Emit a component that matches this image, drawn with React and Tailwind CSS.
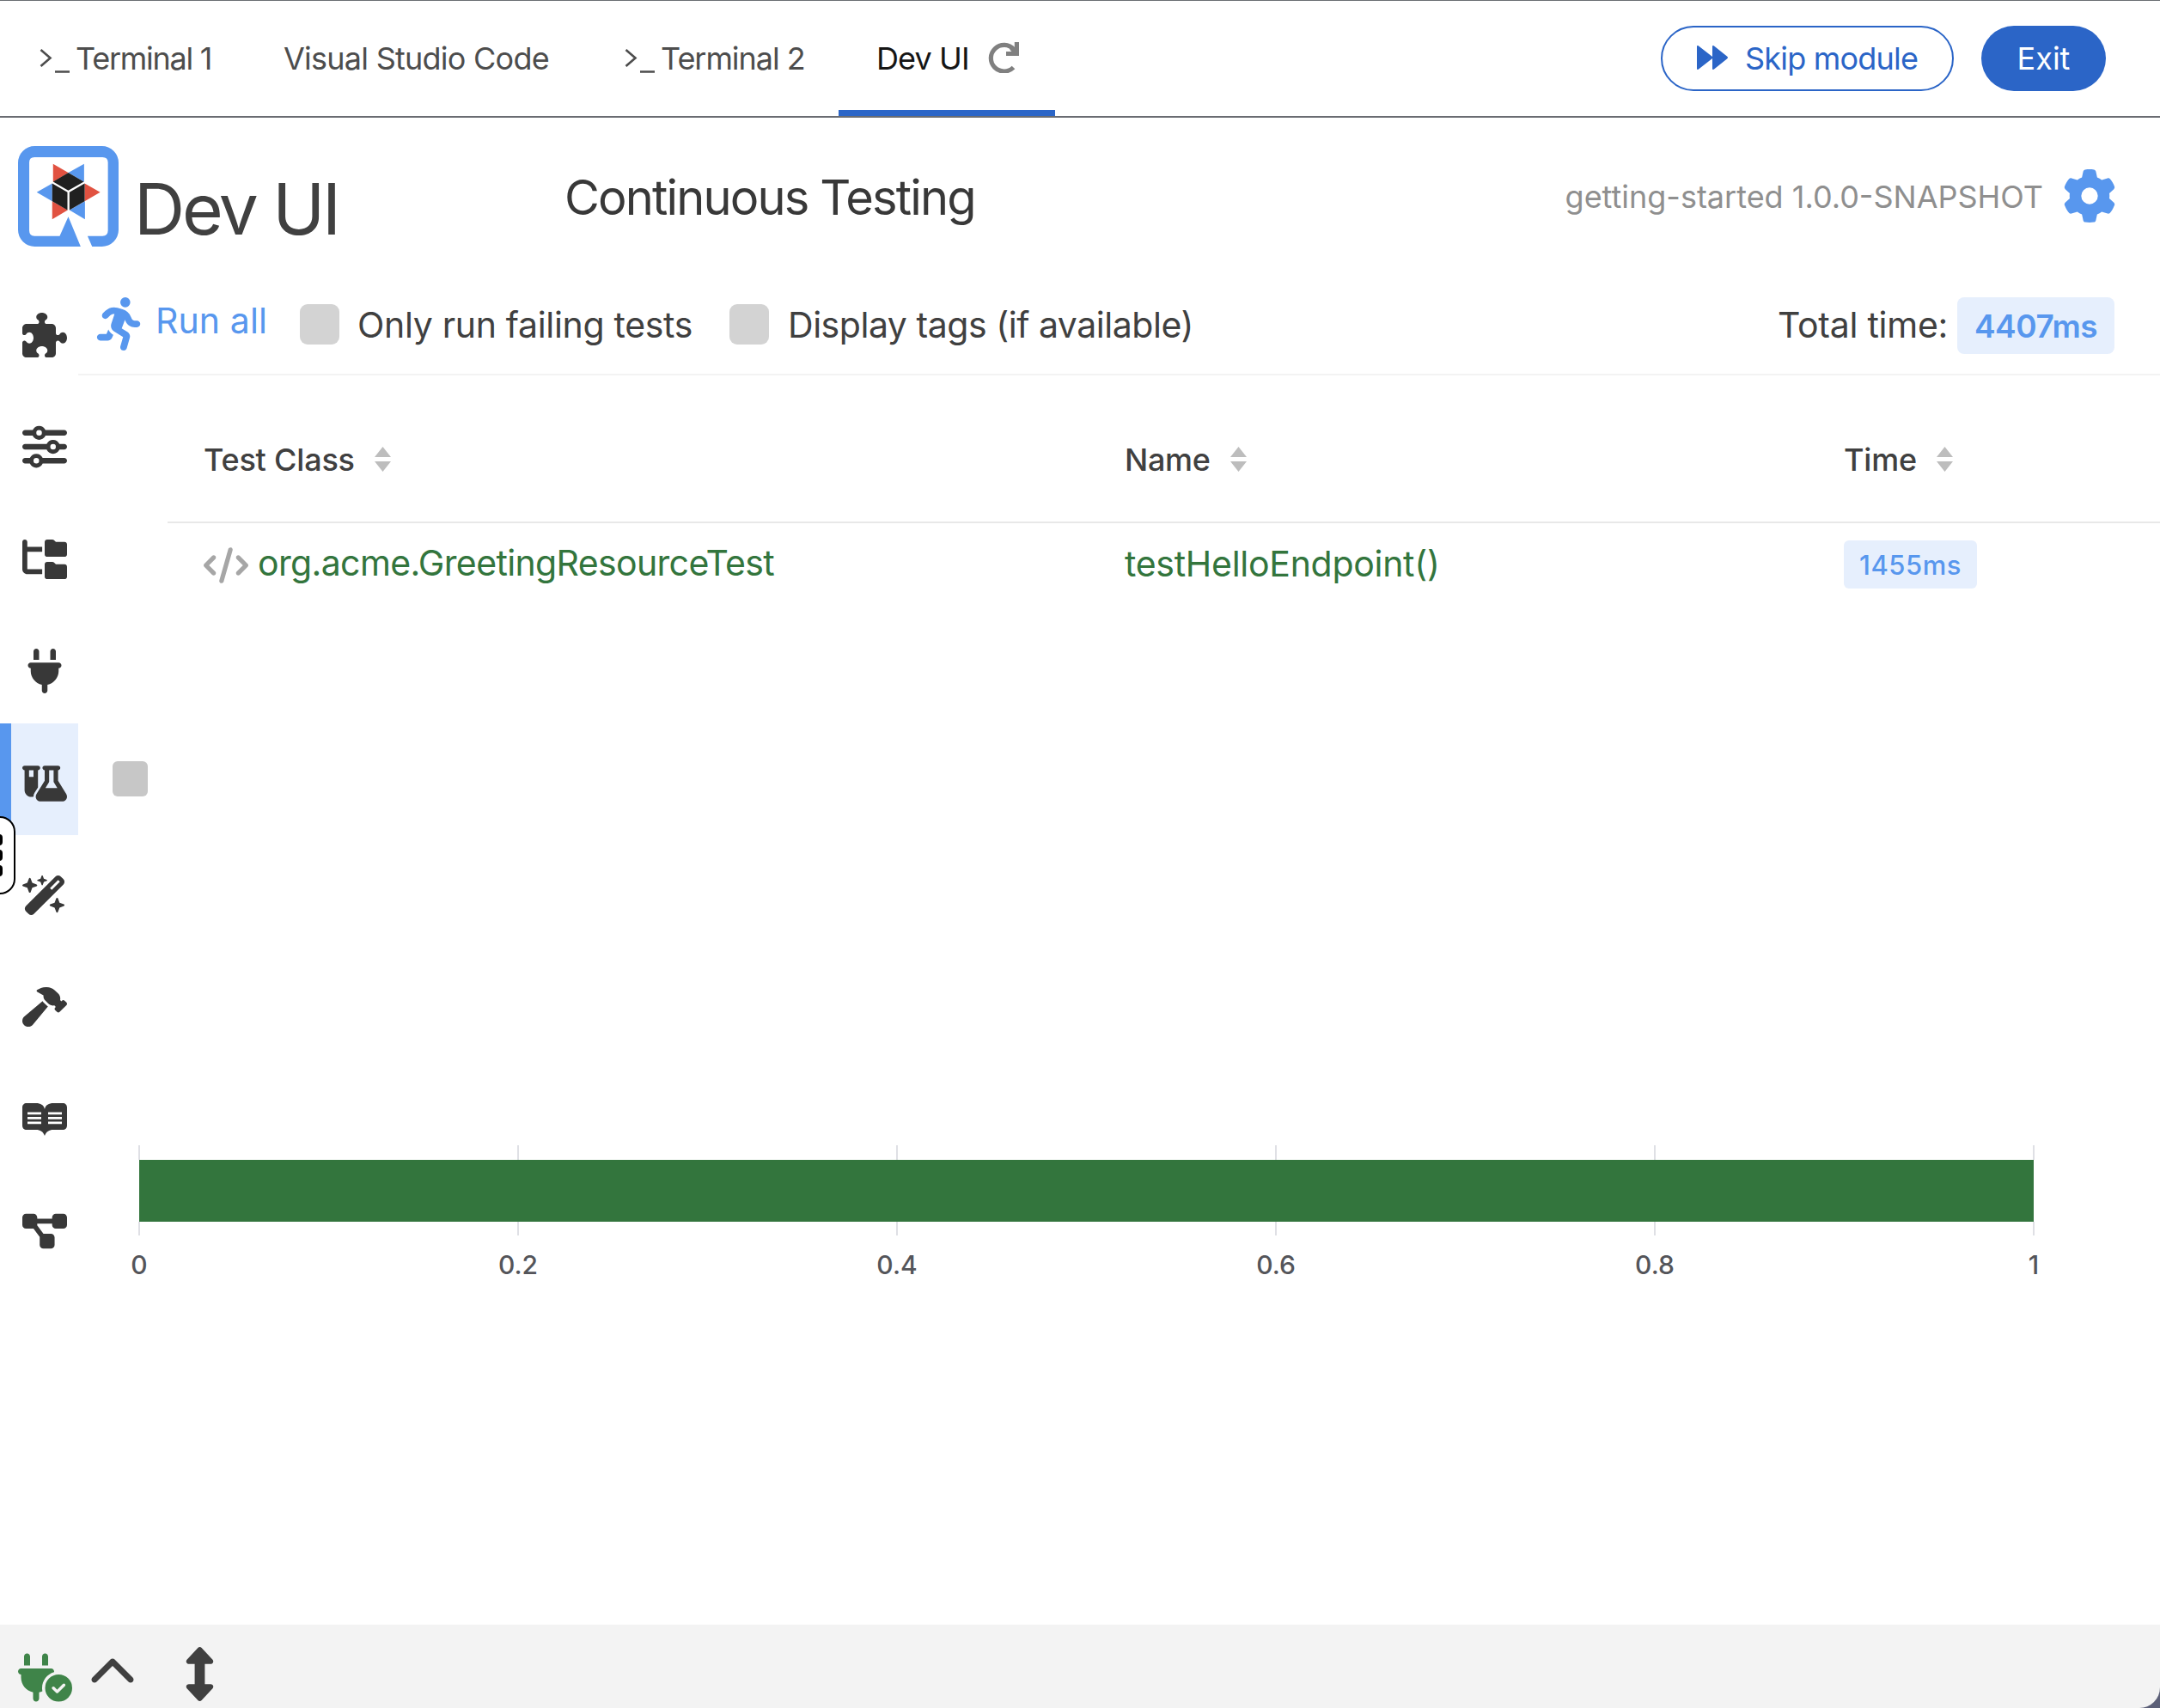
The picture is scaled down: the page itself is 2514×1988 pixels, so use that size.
import {
  FaPuzzlePiece, FaSliders, FaFolderTree, FaPlug, FaFlaskVial, FaWandMagicSparkles, FaHammer,
  FaDiagramProject, FaPersonRunning, FaGear, FaUpDown, FaChevronUp, FaPlugCircleCheck, FaCode,
} from "react-icons/fa6";

function BookIcon({ className }) {
  return (
    <svg viewBox="0 0 52 38" className={className} fill="currentColor">
      <path
        fillRule="evenodd"
        d="M5 0h11c5 0 9 2 10 7 1-5 5-7 10-7h11c3 0 5 2 5 5v21c0 3-2 5-5 5H36c-5 0-8 2-10 7-2-5-5-7-10-7H5c-3 0-5-2-5-5V5c0-3 2-5 5-5zM6 10.500v2.800h16v-2.800zM6 16v2.800h16V16zM6 21.500v2.800h16v-2.800zM30 10.500v2.800h16v-2.800zM30 16v2.800h16V16zM30 21.500v2.800h16v-2.800z"
      />
    </svg>
  );
}

function QuarkusLogo() {
  return (
    <svg viewBox="0 0 350 350" className="h-[117px] w-[117px] shrink-0">
      <path
        fill="#5897ee"
        fillRule="evenodd"
        d="M58 0H292A58 58 0 0 1 350 58V292A58 58 0 0 1 292 350H258L242 313H294Q313 313 313 294V57Q313 39 294 39H57Q39 39 39 57V294Q39 313 57 313H145L175 246L218 350H58A58 58 0 0 1 0 292V58A58 58 0 0 1 58 0Z"
      />
      <path fill="#e15241" d="M122 62 175 93 122 125ZM286 161 232 130V192ZM119 255 173 223 119 192Z" />
      <path fill="#5897ee" d="M230 62 175 93 230 125ZM65 161 119 130V192ZM233 255 179 223 233 192Z" />
      <path fill="#202020" d="M175 93 229 124 175 155 122 124ZM119 130 172 161V223L119 192ZM232 130 179 161V223L232 192Z" />
    </svg>
  );
}

function PromptIcon() {
  return (
    <svg viewBox="0 0 36 30" className="mr-[7px] h-[30px] w-[36px] shrink-0 translate-x-px translate-y-[2px]" fill="none" stroke="#4d4d4d" strokeWidth="2.6">
      <path d="M1.500 3 12.500 12.500 1.500 22M18 28.500H35" />
    </svg>
  );
}

function Sorter() {
  return (
    <svg viewBox="0 0 19 29" className="h-[29px] w-[19px] shrink-0 -translate-y-px" fill="#bdbdbd">
      <path d="M9.500 0 19 12H0ZM9.500 29 0 17H19Z" />
    </svg>
  );
}

const nav = [FaPuzzlePiece, FaSliders, FaFolderTree, FaPlug, FaFlaskVial, FaWandMagicSparkles, FaHammer, BookIcon, FaDiagramProject];
const ticks = ["0", "0.2", "0.4", "0.6", "0.8", "1"];

export default function App() {
  return (
    <div className="relative flex h-[1988px] w-[2514px] flex-col overflow-hidden bg-white font-['Inter',sans-serif] text-[#404040]">
      <div className="flex h-[137px] shrink-0 border-t border-b-2 border-t-[#6a6e73] border-b-[#6a6c72] text-[36px] text-[#4d4d4d]">
        <div className="flex w-[330px] items-center pl-[45px]">
          <PromptIcon />
          <span className="tracking-[-1.25px] whitespace-nowrap">Terminal 1</span>
        </div>
        <div className="flex w-[396px] items-center">
          <span className="tracking-[-0.75px] whitespace-nowrap">Visual Studio Code</span>
        </div>
        <div className="flex w-[250px] items-center">
          <PromptIcon />
          <span className="tracking-[-1.05px] whitespace-nowrap">Terminal 2</span>
        </div>
        <div className="flex w-[252px] items-center border-b-[7px] border-[#2b65c7] pt-[7px] pl-[44px] text-[#151515]">
          <span className="w-[130px] tracking-[-0.9px] whitespace-nowrap">Dev UI</span>
          <svg viewBox="0 0 36 36" className="h-[36px] w-[36px] -translate-y-px" fill="none" stroke="#808080" strokeWidth="5.200">
            <path d="M29.500 29.500A15.300 15.300 0 1 1 30 8.500" />
            <path d="M21 13.500H33.400V0" />
            <path d="M27 7 33 13" />
          </svg>
        </div>
        <div className="ml-auto flex items-start gap-[32px] pt-[29px] pr-[63px]">
          <div className="flex h-[76px] w-[341px] items-center rounded-full border-2 border-[#2b65c7] pl-[40px] text-[#2b65c7]">
            <svg viewBox="0 0 36 28" className="mr-[20px] h-[28px] w-[36px] -translate-y-px" fill="currentColor">
              <path d="M0 1.500Q0-1 2 .5L18 13V1.500Q18-1 20 .5L35 12.500Q37 14 35 15.500L20 27.500Q18 29 18 26.500V15L2 27.500Q0 29 0 26.500Z" />
            </svg>
            <span className="tracking-[-0.8px] whitespace-nowrap">Skip module</span>
          </div>
          <div className="flex h-[76px] w-[145px] items-center justify-center rounded-full bg-[#2b65c7] text-white">
            <span>Exit</span>
          </div>
        </div>
      </div>

      <div className="flex h-[185px] shrink-0 items-start pt-[33px] pl-[21px]">
        <QuarkusLogo />
        <div className="mt-[18px] ml-[18px] w-[501px] text-[82px] leading-[112px] tracking-[-3.3px] whitespace-nowrap">Dev UI</div>
        <div className="mt-[20px] text-[56px] leading-[80px] tracking-[-1.85px] whitespace-nowrap text-[#383838]">Continuous Testing</div>
        <div className="mt-[20px] mr-[51px] ml-auto flex h-[76px] items-center">
          <span className="mr-[23px] translate-y-px text-[36px] whitespace-nowrap text-[#8f8f8f]">getting-started 1.0.0-SNAPSHOT</span>
          <FaGear className="h-[62px] w-[62px] text-[#5897ee]" />
        </div>
      </div>

      <div className="flex h-[1569px] shrink-0">
        <nav className="-mt-[1.5px] flex w-[91px] shrink-0 flex-col text-[#383838]">
          {nav.map((Icon, i) => (
            <div key={i} className={i === 4 ? "flex h-[130.4px] shrink-0 items-center border-l-[13px] border-[#5897ee] bg-[#e6effd] pt-[8.6px] pl-[13px]" : "flex h-[130.4px] shrink-0 items-center pt-[8.6px] pl-[26px]"}>
              <Icon className="h-[52px] w-[52px]" />
            </div>
          ))}
        </nav>

        <main className="flex flex-1 flex-col">
          <div className="flex h-[115px] items-center border-b-2 border-[#f3f3f3] text-[41px]">
            <FaPersonRunning className="ml-[18px] h-[62px] w-[62px] -translate-y-[2px] text-[#5897ee]" />
            <span className="mb-[10px] ml-[10px] w-[168px] tracking-[0.1px] whitespace-nowrap text-[#5897ee]">Run all</span>
            <div className="h-[47px] w-[46px] -translate-y-px rounded-[9px] bg-[#d3d3d3]" />
            <span className="ml-[21px] w-[433px] tracking-[-0.32px] whitespace-nowrap">Only run failing tests</span>
            <div className="h-[47px] w-[46px] -translate-y-px rounded-[9px] bg-[#d3d3d3]" />
            <span className="ml-[22px] tracking-[-0.46px] whitespace-nowrap">Display tags (if available)</span>
            <span className="ml-auto w-[209px] tracking-[-0.25px] whitespace-nowrap">Total time:</span>
            <div className="mr-[53px] flex h-[66px] w-[183px] items-center justify-center rounded-[8px] bg-[#e6effd] text-[37px] font-semibold text-[#5897ee]">
              <span className="translate-y-px tracking-[-0.5px]">4407ms</span>
            </div>
          </div>

          <div className="flex h-[896px]">
            <div className="w-[104px] shrink-0 pt-[449px] pl-[40px]">
              <div className="h-[41px] w-[41px] rounded-[6px] bg-[#c7c7c7]" />
            </div>
            <div className="flex-1">
              <div className="flex h-[172px] items-center border-b-2 border-[#e8e8e8] pt-[26px] pl-[42px] text-[36px] font-medium">
                <div className="flex w-[1072px] items-center gap-[23px]"><span className="tracking-[-0.2px]">Test Class</span><Sorter /></div>
                <div className="flex w-[837px] items-center gap-[23px]"><span className="tracking-[-0.3px]">Name</span><Sorter /></div>
                <div className="flex items-center gap-[23px]"><span className="tracking-[-0.2px]">Time</span><Sorter /></div>
              </div>
              <div className="flex h-[96px] items-center pl-[42px] text-[41px] text-[#33753d]">
                <div className="flex w-[1072px] items-center">
                  <FaCode className="mr-[11px] h-[52px] w-[52px] translate-y-px text-[#a6a6a6]" />
                  <span className="-translate-y-px tracking-[-0.64px]">org.acme.GreetingResourceTest</span>
                </div>
                <div className="w-[837px] tracking-[-0.28px]">testHelloEndpoint()</div>
                <div className="flex h-[56px] w-[155px] items-center justify-center rounded-[6px] bg-[#e6effd] text-[31px] font-medium text-[#5897ee]">
                  <span className="translate-y-px tracking-[0.5px]">1455ms</span>
                </div>
              </div>
            </div>
          </div>

          <div className="ml-[70px] h-[105px] w-[2207px]">
            <div className="flex h-[17px] justify-between">
              {ticks.map((t) => <div key={t} className="w-[2px] bg-[#dfe0e5]" />)}
            </div>
            <div className="ml-[1px] h-[72px] w-[2205px] bg-[#33753d]" />
            <div className="flex h-[16px] justify-between">
              {ticks.map((t) => <div key={t} className="w-[2px] bg-[#dfe0e5]" />)}
            </div>
          </div>
          <div className="mt-[14px] ml-[21px] flex w-[2305px] justify-between text-[30px] leading-[40px] font-[450] text-[#54555a]">
            {ticks.map((t) => <div key={t} className="w-[100px] text-center">{t}</div>)}
          </div>
        </main>
      </div>

      <div className="flex h-[97px] shrink-0 items-center bg-[#5c6078]">
        <div className="flex h-full w-full items-start rounded-br-[24px] bg-[#f3f3f3] pl-[21px] text-[#404040]">
          <FaPlugCircleCheck className="mt-[30px] h-[63px] w-[63px] text-[#3f8449]" />
          <FaChevronUp className="mt-[29px] ml-[19px] h-[56px] w-[56px]" />
          <FaUpDown className="mt-[26px] ml-[42px] h-[63px] w-[63px]" />
        </div>
      </div>

      <div className="absolute top-[950px] -left-[44px] flex h-[91px] w-[62px] flex-col items-end justify-center gap-[5px] rounded-[18px] border-2 border-black bg-white pr-[13px]">
        <div className="h-[13px] w-[13px] rounded-[4px] bg-black" />
        <div className="h-[13px] w-[13px] rounded-[4px] bg-black" />
        <div className="h-[13px] w-[13px] rounded-[4px] bg-black" />
      </div>
    </div>
  );
}
